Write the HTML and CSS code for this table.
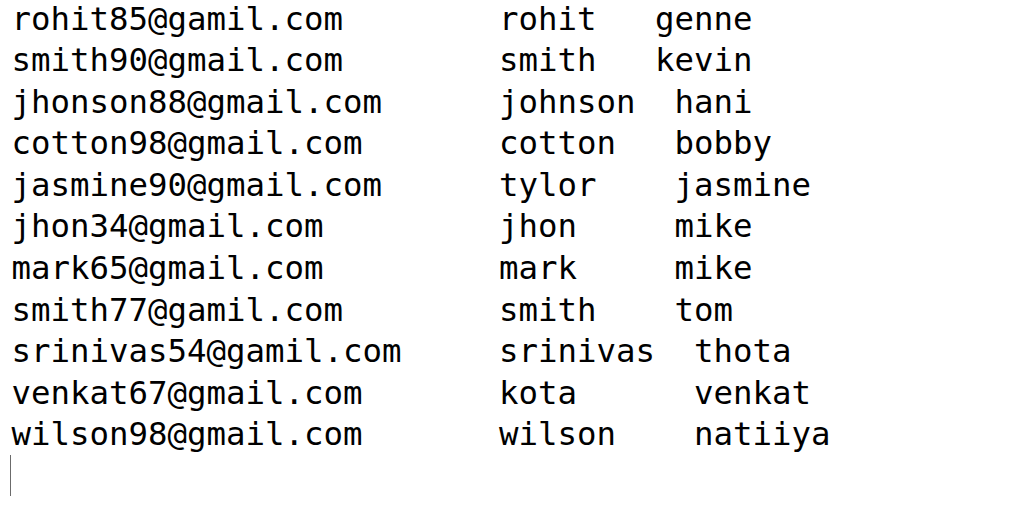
FILE: index.html
```html
<!DOCTYPE html>
<html>
<head>
<meta charset="utf-8">
<link rel="stylesheet" href="styles.css">
</head>
<body>
<div class="editor"><pre class="text">rohit85@gamil.com        rohit   genne
smith90@gmail.com        smith   kevin
jhonson88@gmail.com      johnson  hani
cotton98@gmail.com       cotton   bobby
jasmine90@gmail.com      tylor    jasmine
jhon34@gmail.com         jhon     mike
mark65@gmail.com         mark     mike
smith77@gamil.com        smith    tom
srinivas54@gamil.com     srinivas  thota
venkat67@gmail.com       kota      venkat
wilson98@gmail.com       wilson    natiiya
<span class="caret"></span></pre></div>
</body>
</html>
```
FILE: styles.css
```css
html, body {
  margin: 0;
  padding: 0;
  background: #ffffff;
  overflow: hidden;
}
.editor {
  padding-left: 11.5px;
}
.text {
  margin: -1.5px 0 0 0;
  font-family: "DejaVu Sans Mono", "Liberation Mono", monospace;
  font-size: 32.4px;
  line-height: 41.6px;
  color: #000000;
  white-space: pre;
}
.caret {
  display: inline-block;
  width: 1px;
  height: 41px;
  background: #6b6b6b;
  vertical-align: top;
  margin-left: -1.5px;
  margin-top: -1px;
}
```
